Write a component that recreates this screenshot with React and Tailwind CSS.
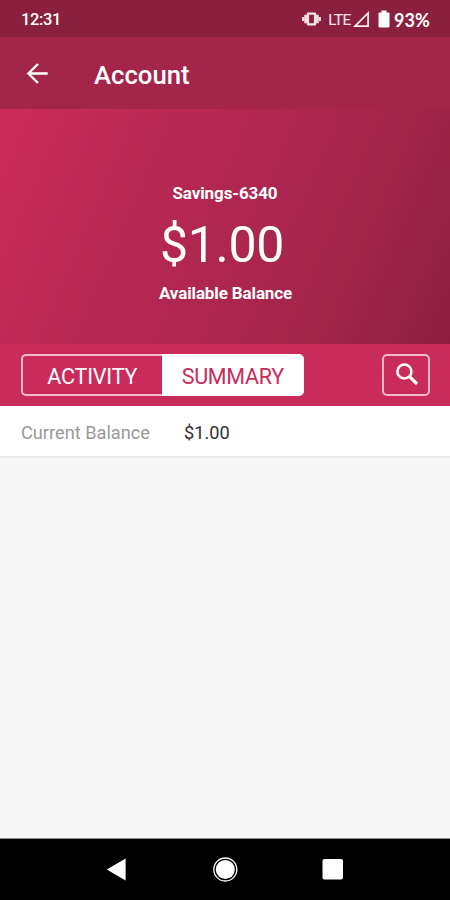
import React, { useState } from 'react';

const tabs = [
  { id: 'activity', label: 'ACTIVITY' },
  { id: 'summary', label: 'SUMMARY' },
];

const summaryRows = [{ label: 'Current Balance', value: '$1.00' }];

function StatusBar() {
  return (
    <div className="flex h-[37px] items-center bg-[#8a1f3e] pl-[21px] pr-[18px] text-white">
      <span className="pt-[2px] text-[16.5px] font-medium leading-5 tracking-[-0.4px]">12:31</span>
      <div className="ml-auto flex h-full items-center">
        <svg className="h-[16px] w-[20px] text-[#fbe3ea]" viewBox="0 0 20 16" fill="currentColor">
          <path d="M6 1.5h7q1.2 0 1.2 1.2v10.6q0 1.2-1.2 1.2H6q-1.2 0-1.2-1.2V2.7q0-1.2 1.2-1.2zM7.1 3.8v8.4h4.8V3.8z" fillRule="evenodd" />
          <path d="M2.3 3.8h2.6v8.4H2.3zM0.1 6h2v4h-2zM14.1 3.8h2.6v8.4h-2.6zM16.9 6h2v4h-2z" />
        </svg>
        <span className="ml-[6px] mt-[1px] w-[23px] whitespace-nowrap font-['Lato',sans-serif] text-[16px] leading-5 tracking-[-1px] text-[#fbe3ea]">LTE</span>
        <svg className="ml-[2px] h-[18px] w-[18px]" viewBox="0 0 18 18" fill="none" stroke="#fdeef2" strokeWidth="1.7">
          <path d="M2 16.2H15.100V3z" />
        </svg>
        <svg className="ml-[7px] h-[18px] w-[12px]" viewBox="0 0 12 18" fill="currentColor">
          <path d="M3.5 0.5h5v2h1.8q1.2 0 1.2 1.2v12.6q0 1.2-1.2 1.2H1.7q-1.2 0-1.2-1.2V3.7q0-1.2 1.2-1.2h1.800z" />
        </svg>
        <span className="ml-[4px] mt-[2px] w-[38px] whitespace-nowrap font-['Lato',sans-serif] text-[18px] font-bold leading-5">93%</span>
      </div>
    </div>
  );
}

function AppBar() {
  return (
    <header className="flex h-[72px] items-center bg-[#a4254a] pl-[26px] text-white">
      <svg className="h-[22px] w-[22px]" viewBox="0 0 22 22" fill="none" stroke="currentColor" strokeWidth="2.4">
        <path d="M21.7 11.5H2.5M12 2L2.4 11.5l9.6 9.5" />
      </svg>
      <h1 className="ml-[46px] mt-[4px] text-[25.7px] font-medium leading-8">Account</h1>
    </header>
  );
}

function BalanceCard() {
  return (
    <section className="flex h-[235px] flex-col items-center bg-[linear-gradient(113deg,#cb2b5b_0%,#b12751_45%,#a2254a_76%,#8b1e3f_100%)] pt-[73px] text-white">
      <p className="text-[17px] font-bold leading-[22px] tracking-[-0.1px]">Savings-6340</p>
      <p className="mt-[11px] pr-[6px] text-[50px] leading-[60px] tracking-[-0.3px]">$1.00</p>
      <p className="mt-[7px] pl-px text-[17px] font-bold leading-[22px] tracking-[-0.13px]">Available Balance</p>
    </section>
  );
}

function TabBar({ activeTab, setActiveTab }) {
  return (
    <div className="flex h-[62px] items-start justify-between bg-[#c92c5b] pl-[21px] pr-[20px] pt-[10px]">
      <div className="flex h-[42px] w-[283px]">
        {tabs.map((tab) => (
          <button
            key={tab.id}
            onClick={() => setActiveTab(tab.id)}
            className={
              activeTab === tab.id
                ? 'flex-1 border-2 border-white bg-white pt-[3px] text-[21.5px] leading-none tracking-[-0.3px] text-[#c92c5b] first:rounded-l-[5px] last:rounded-r-[5px]'
                : 'flex-1 border-2 border-[#f3b9cb] pt-[3px] text-[21.5px] leading-none tracking-[-0.2px] text-white first:rounded-l-[5px] first:border-r-0 last:rounded-r-[5px] last:border-l-0'
            }
          >
            {tab.label}
          </button>
        ))}
      </div>
      <button className="flex h-[42px] w-[48px] items-center justify-center rounded-[5px] border-2 border-[#f3b9cb] pl-[2px] text-white">
        <svg className="h-[24px] w-[24px]" viewBox="0 0 24 24" fill="none" stroke="currentColor">
          <circle cx="9.4" cy="8.5" r="7" strokeWidth="2.6" />
          <path d="M14.3 13.4L22 21" strokeWidth="3.2" />
        </svg>
      </button>
    </div>
  );
}

function NavBar() {
  return (
    <nav className="flex h-[62px] items-center justify-between border-t border-[#8a8a8a] bg-black px-[106px]">
      <svg className="h-[26px] w-[22px]" viewBox="0 0 22 26" fill="white">
        <path d="M0.8 12.5L19.6 1.5v22z" />
      </svg>
      <svg className="h-[26px] w-[26px]" viewBox="0 0 26 26">
        <circle cx="13.3" cy="12.5" r="11.5" fill="none" stroke="white" strokeWidth="1.3" />
        <circle cx="13.3" cy="12.5" r="9.5" fill="white" />
      </svg>
      <svg className="h-[22px] w-[22px]" viewBox="0 0 22 22" fill="white">
        <rect x="0.5" y="0" width="20.5" height="20.5" rx="2" />
      </svg>
    </nav>
  );
}

function App() {
  const [activeTab, setActiveTab] = useState('summary');

  return (
    <div className="flex h-[900px] w-[450px] flex-col overflow-hidden bg-[#f7f7f7] font-['Roboto',sans-serif]">
      <StatusBar />
      <AppBar />
      <BalanceCard />
      <TabBar activeTab={activeTab} setActiveTab={setActiveTab} />

      <main className="flex-1">
        {/* Only the summary tab has rows */}
        {activeTab === 'summary' &&
          summaryRows.map((row) => (
            <div key={row.label} className="flex h-[52px] items-center border-b-2 border-[#ececec] bg-white pl-[21px] pt-[3px] text-[18.2px]">
              <span className="w-[163px] text-[#999999]">{row.label}</span>
              <span className="text-[#303030]">{row.value}</span>
            </div>
          ))}
      </main>

      <NavBar />
    </div>
  );
}

export default App;
